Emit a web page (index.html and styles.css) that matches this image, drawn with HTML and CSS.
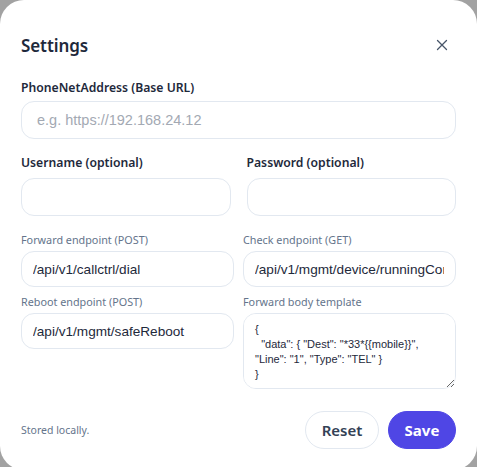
FILE: index.html
```html
<!DOCTYPE html>
<html>
<head>
<meta charset="utf-8">
<link rel="stylesheet" href="styles.css">
</head>
<body>
<div class="dialog">
  <div class="header">
    <h1 class="title">Settings</h1>
    <button class="close" aria-label="Close">
      <svg width="12" height="12" viewBox="0 0 12 12"><path d="M1.5 1.5L10.5 10.5M10.5 1.5L1.5 10.5" stroke="#475569" stroke-width="1.3" stroke-linecap="round" fill="none"/></svg>
    </button>
  </div>

  <div class="field">
    <label class="label">PhoneNetAddress (Base URL)</label>
    <input class="input" type="text" placeholder="e.g. https://192.168.24.12">
  </div>

  <div class="grid2">
    <div class="field">
      <label class="label">Username (optional)</label>
      <input class="input" type="text">
    </div>
    <div class="field">
      <label class="label">Password (optional)</label>
      <input class="input" type="password">
    </div>
  </div>

  <div class="grid-adv">
    <div class="field">
      <label class="sublabel">Forward endpoint (POST)</label>
      <input class="input sm" type="text" value="/api/v1/callctrl/dial">
    </div>
    <div class="field">
      <label class="sublabel">Check endpoint (GET)</label>
      <input class="input sm" type="text" value="/api/v1/mgmt/device/runningConfig">
    </div>
    <div class="field">
      <label class="sublabel">Reboot endpoint (POST)</label>
      <input class="input sm" type="text" value="/api/v1/mgmt/safeReboot">
    </div>
    <div class="field">
      <label class="sublabel">Forward body template</label>
      <textarea class="textarea">{
  "data": { "Dest": "*33*{{mobile}}", "Line": "1", "Type": "TEL" }
}</textarea>
    </div>
  </div>

  <div class="footer">
    <span class="note">Stored locally.</span>
    <div class="actions">
      <button class="btn btn-ghost">Reset</button>
      <button class="btn btn-primary">Save</button>
    </div>
  </div>
</div>
</body>
</html>
```
FILE: styles.css
```css
* { box-sizing: border-box; }
html, body { margin: 0; padding: 0; }
body {
  background: #a2a2a2;
  font-family: "Noto Sans", "Open Sans", sans-serif;
  width: 477px;
  height: 467px;
  overflow: hidden;
}
.dialog {
  background: #fff;
  width: 477px;
  height: 470px;
  border-radius: 24px;
  padding: 24px 21px 0 21px;
}
.header {
  display: flex;
  align-items: center;
  justify-content: space-between;
  height: 42px;
}
.title {
  margin: 0;
  font-size: 17px;
  font-weight: 600;
  color: #1e293b;
  letter-spacing: -0.1px;
}
.close {
  border: none;
  background: none;
  padding: 0;
  width: 24px;
  height: 24px;
  display: flex;
  align-items: center;
  justify-content: center;
  margin-right: 2px;
}
.field { display: flex; flex-direction: column; }
.label {
  font-size: 12.2px;
  font-weight: 600;
  color: #1e293b;
  height: 16px;
  line-height: 16px;
  margin-top: 14px;
  margin-bottom: 5px;
}
.grid2 .label { margin-bottom: 7px; }
.input {
  height: 38px;
  border: 1px solid #e2e8f0;
  border-radius: 13px;
  padding: 0 15px;
  font-family: "Liberation Sans", Arial, sans-serif;
  font-size: 14.5px;
  color: #1e293b;
  outline: none;
  width: 100%;
  background: #fff;
}
.input::placeholder { color: #a3a9b3; }
.grid2 {
  display: grid;
  grid-template-columns: 1fr 1fr;
  column-gap: 16px;
  margin-top: 2px;
}
.grid-adv {
  display: grid;
  grid-template-columns: 1fr 1fr;
  column-gap: 9px;
  margin-top: 9px;
  align-items: start;
}
.sublabel {
  font-size: 10.8px;
  color: #64748b;
  height: 16px;
  line-height: 16px;
  margin-top: 7px;
  margin-bottom: 3px;
}
.input.sm {
  height: 36px;
  padding: 0 11px;
  font-size: 13.6px;
  border-radius: 13px;
}
.textarea {
  height: 76px;
  border: 1px solid #e2e8f0;
  border-radius: 13px;
  padding: 8px 11px;
  font-family: "Liberation Sans", Arial, sans-serif;
  font-size: 11px;
  line-height: 15px;
  color: #1e293b;
  resize: vertical;
  outline: none;
  width: 100%;
}
.footer {
  display: flex;
  align-items: center;
  justify-content: space-between;
  margin-top: 22px;
}
.note {
  font-size: 10.5px;
  color: #64748b;
}
.actions { display: flex; gap: 9px; }
.btn {
  height: 38px;
  border-radius: 19px;
  font-family: "Noto Sans", "Open Sans", sans-serif;
  font-size: 15px;
  font-weight: 600;
  padding: 0;
  cursor: pointer;
}
.btn-ghost {
  background: #fff;
  border: 1px solid #e2e8f0;
  color: #334155;
  width: 74px;
}
.btn-primary {
  background: #4f46e5;
  border: 1px solid #4f46e5;
  color: #fff;
  width: 68px;
  font-weight: 700;
}
```
